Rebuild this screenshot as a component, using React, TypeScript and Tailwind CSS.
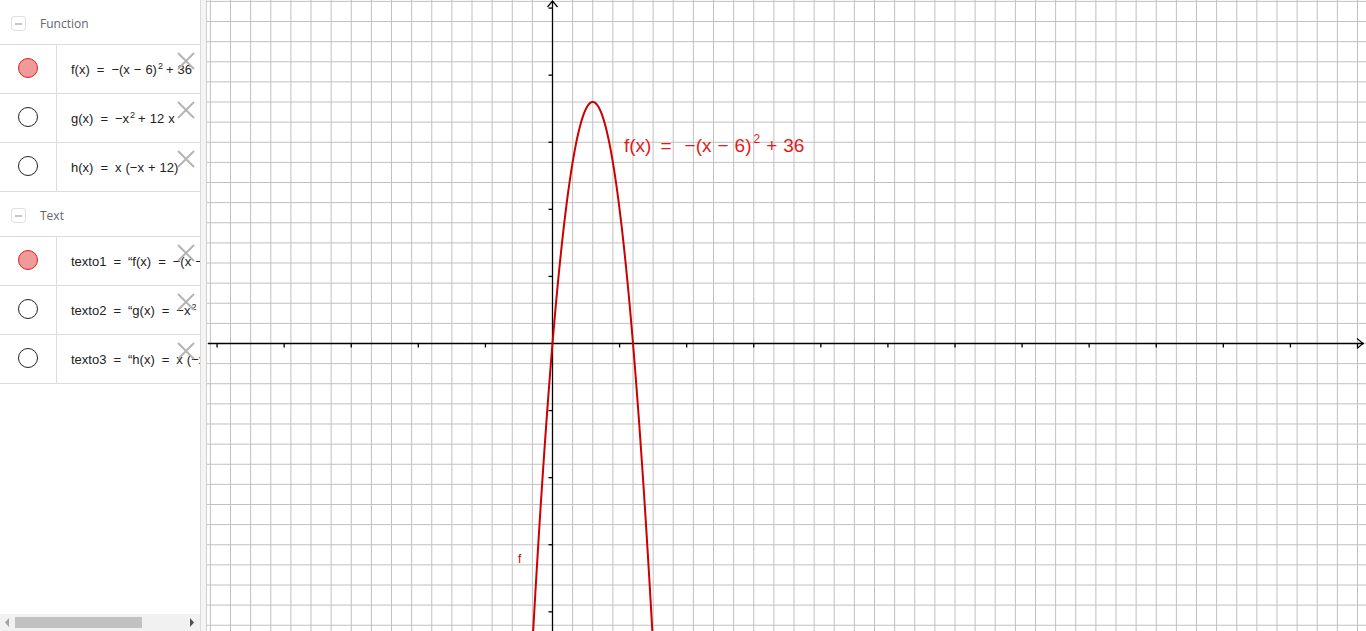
import React from "react";

const U = 6.7083; // pixels per unit
const OX = 552.5;
const OY = 343.5;
const GRID = U * 3;

const mathFont = { fontFamily: "'Liberation Sans', Arial, sans-serif" };

function Dot({ filled }: { filled: boolean }) {
  return filled ? (
    <div className="w-[20px] h-[20px] rounded-full bg-[#f19a9a] border border-[#d42020]" />
  ) : (
    <div className="w-[20px] h-[20px] rounded-full bg-white border border-[#222]" />
  );
}

function Cross() {
  return (
    <svg className="absolute right-[5px] top-[7px]" width="18" height="18" viewBox="0 0 18 18">
      <path d="M1 1 L17 17 M17 1 L1 17" stroke="#b4b4b4" strokeWidth="2" />
    </svg>
  );
}

function Row({ filled, children }: { filled?: boolean; children: React.ReactNode }) {
  return (
    <div className="relative flex h-[49px] border-b border-[#dcdcdc]">
      <div className="w-[57px] shrink-0 flex items-center justify-center pb-[3px] border-r border-[#dcdcdc]">
        <Dot filled={!!filled} />
      </div>
      <div
        className="flex-1 min-w-0 overflow-hidden whitespace-nowrap flex items-center pl-[14px] pt-[2px] text-[13px] text-[#222]"
        style={mathFont}
      >
        <span className="shrink-0">{children}</span>
      </div>
      <Cross />
    </div>
  );
}

function Header({ label }: { label: string }) {
  return (
    <div className="flex items-center h-[45px] pt-[3px] border-b border-[#dcdcdc]">
      <div className="ml-[11px] w-[15px] h-[15px] rounded-[3px] border border-[#e0e0e0] flex items-center justify-center">
        <div className="w-[7px] h-[2px] bg-[#c8c8c8]" />
      </div>
      <span className="ml-[14px] text-[12px] text-[#666]" style={{ fontFamily: "'Open Sans', sans-serif" }}>
        {label}
      </span>
    </div>
  );
}

function S({ w = 7 }: { w?: number }) {
  return <span className={w === 7 ? "inline-block w-[7px]" : "inline-block w-[4px]"} />;
}

function Sup({ children }: { children: React.ReactNode }) {
  return <sup className="text-[9px] relative -top-[5px] ml-[1px] mr-[3px]">{children}</sup>;
}

function Graph() {
  const vLines: number[] = [];
  for (let k = -20; k <= 45; k++) {
    const x = OX + k * GRID;
    if (x > 207 && x < 1366) vLines.push(x);
  }
  const hLines: number[] = [];
  for (let k = -20; k <= 20; k++) {
    const y = OY + k * GRID;
    if (y > 0 && y < 631) hLines.push(y);
  }
  const xTicks: number[] = [];
  for (let k = -6; k <= 13; k++) {
    const x = OX + k * U * 10;
    if (k !== 0 && x > 210 && x < 1360) xTicks.push(x);
  }
  const yTicks: number[] = [];
  for (let k = -6; k <= 6; k++) {
    const y = OY + k * U * 10;
    if (k !== 0 && y > 8 && y < 631) yTicks.push(y);
  }
  const pts: string[] = [];
  for (let x = -3.6; x <= 15.6; x += 0.05) {
    const y = -(x - 6) * (x - 6) + 36;
    pts.push(`${(OX + x * U).toFixed(2)},${(OY - y * U).toFixed(2)}`);
  }

  return (
    <svg width="1159" height="631" viewBox="207 0 1159 631" className="block">
      <rect x="207" y="0" width="1159" height="631" fill="#fff" />
      {vLines.map((x) => (
        <line key={"v" + x} x1={x} y1={0} x2={x} y2={631} stroke="#c0c0c0" strokeWidth="1" />
      ))}
      {hLines.map((y) => (
        <line key={"h" + y} x1={207} y1={y} x2={1366} y2={y} stroke="#c0c0c0" strokeWidth="1" />
      ))}
      <line x1={208} y1={OY} x2={1364} y2={OY} stroke="#000" strokeWidth="1.3" />
      <path d={`M1357 ${OY - 5} L1363 ${OY} L1357 ${OY + 5}`} stroke="#000" strokeWidth="1.2" fill="none" />
      <line x1={OX} y1={1} x2={OX} y2={631} stroke="#000" strokeWidth="1.3" />
      <path d={`M${OX - 5} 7 L${OX} 1 L${OX + 5} 7`} stroke="#000" strokeWidth="1.2" fill="none" />
      {xTicks.map((x) => (
        <line key={"xt" + x} x1={x} y1={OY} x2={x} y2={OY + 4} stroke="#000" strokeWidth="1.3" />
      ))}
      {yTicks.map((y) => (
        <line key={"yt" + y} x1={OX - 4} y1={y} x2={OX} y2={y} stroke="#000" strokeWidth="1.3" />
      ))}
      <polyline points={pts.join(" ")} fill="none" stroke="#cc0000" strokeWidth="2" />
      <text x="518" y="563" fontSize="12" fill="#cc0000" style={mathFont}>
        f
      </text>
      <text x="624" y="152" fontSize="19" fill="#e01b1b" style={mathFont}>
        f(x)
        <tspan dx="9">=</tspan>
        <tspan dx="13">−(x</tspan>
        <tspan dx="6">−</tspan>
        <tspan dx="6">6)</tspan>
        <tspan fontSize="12" dy="-9" dx="2">2</tspan>
        <tspan dy="9" dx="6">+</tspan>
        <tspan dx="6">36</tspan>
      </text>
    </svg>
  );
}

export default function App() {
  return (
    <div className="flex w-[1366px] h-[631px] overflow-hidden bg-white">
      <div className="relative w-[201px] shrink-0 border-r border-[#dcdcdc] bg-white">
        <Header label="Function" />
        <Row filled>
          f(x)<S />=<S />−(x<S w={4} />−<S w={4} />6)<Sup>2</Sup>+<S w={4} />36
        </Row>
        <Row>
          g(x)<S />=<S />−x<Sup>2</Sup>+<S w={4} />12<S w={4} />x
        </Row>
        <Row>
          h(x)<S />=<S />x<S w={4} />(−x<S w={4} />+<S w={4} />12)
        </Row>
        <Header label="Text" />
        <Row filled>
          texto1<S />=<S />“f(x)<S />=<S />−(x<S w={4} />−<S w={4} />6)<Sup>2</Sup>+<S w={4} />36”
        </Row>
        <Row>
          texto2<S />=<S />“g(x)<S />=<S />−x<Sup>2</Sup>+<S w={4} />12<S w={4} />x”
        </Row>
        <Row>
          texto3<S />=<S />“h(x)<S />=<S />x<S w={4} />(−x<S w={4} />+<S w={4} />12)”
        </Row>
        <div className="absolute left-0 right-0 bottom-0 h-[17px] bg-[#f1f1f1] flex items-center">
          <svg width="15" height="17" viewBox="0 0 15 17">
            <path d="M9 4 L5 8.5 L9 13 Z" fill="#a3a3a3" />
          </svg>
          <div className="w-[127px] h-[11px] bg-[#c1c1c1]" />
          <div className="flex-1" />
          <svg width="15" height="17" viewBox="0 0 15 17">
            <path d="M5 4 L9 8.5 L5 13 Z" fill="#505050" />
          </svg>
        </div>
      </div>
      <div className="w-[6px] shrink-0 bg-[#f4f4f4] border-r border-[#d0d0d0]" />
      <div className="flex-1">
        <Graph />
      </div>
    </div>
  );
}
